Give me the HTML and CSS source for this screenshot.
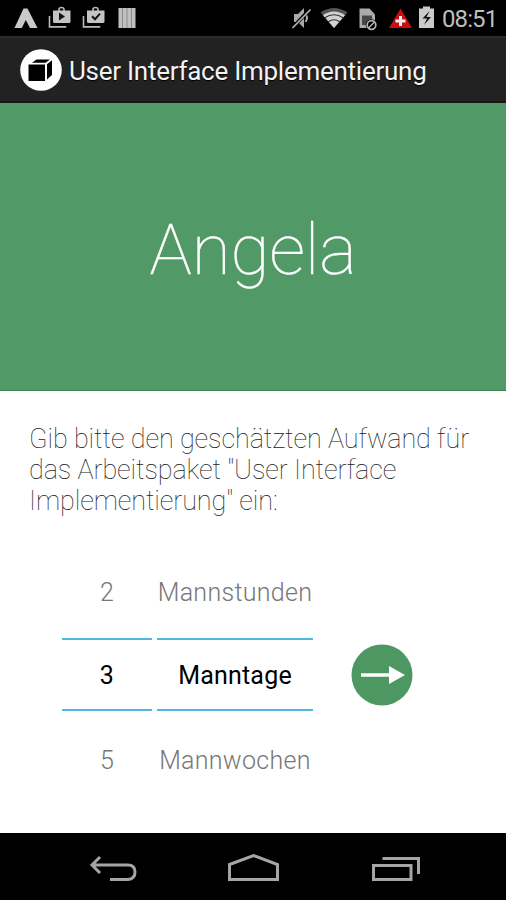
FILE: index.html
```html
<!DOCTYPE html>
<html lang="de">
<head>
<meta charset="utf-8">
<title>User Interface Implementierung</title>
<link rel="stylesheet" href="styles.css">
</head>
<body>
<div class="screen">
  <header class="status">
    <svg class="status-left" width="150" height="36" viewBox="0 0 150 36">
      <path d="M23.500 8.500h4L37.500 28h-7.500l-4.200-8-4 8h-7.300z" fill="#c9c9c9"/>
      <g fill="none" stroke="#b9b9b9" stroke-width="1.600">
        <path d="M49.500 16v10.900h16.800M83.500 16v10.900h16.800"/>
        <path d="M59 11V9.500q0-2 2.500-2t2.500 2V11M93 11V9.500q0-2 2.500-2t2.500 2V11"/>
      </g>
      <path d="M53 10.500h17.500v11q0 1.500-1.500 1.500H54.500q-1.500 0-1.500-1.500zM87 10.500h17.500v11q0 1.500-1.500 1.500H88.500q-1.500 0-1.500-1.500z" fill="#c4c4c4"/>
      <path d="M59 12.500v8l6-4z" fill="#111"/>
      <path d="M92 16.200l3 3 5-5.500" fill="none" stroke="#111" stroke-width="2"/>
      <path d="M118.500 8h17v20h-17z" fill="#c0c0c0"/>
      <path d="M122.500 8v20M127 8v20M131.500 8v20" stroke="#8a8a8a" stroke-width="1"/>
    </svg>
    <svg class="status-right" width="160" height="36" viewBox="280 0 160 36">
      <path d="M294 14h4l6-6v20l-6-6h-4z" fill="#a9a9a9"/>
      <path d="M305.500 14q3 4 0 8" fill="none" stroke="#a9a9a9" stroke-width="2"/>
      <path d="M309.500 9.500L292.500 28" stroke="#000" stroke-width="3.500"/>
      <path d="M310.500 9.500L292.500 28" stroke="#b5b5b5" stroke-width="1.700"/>
      <path d="M320.500 12.500q13.500-9 27 0L334 28z" fill="#555"/>
      <path d="M323 15.300q11-7.500 22 0L334 28z" fill="#d2d2d2"/>
      <path d="M324.500 18q9.500-6.500 19 0M328 22q6-4.500 12 0" fill="none" stroke="#333" stroke-width="1.200"/>
      <path d="M359.500 8.500h10l5.500 6V28h-15.500z" fill="#ababab"/>
      <path d="M362 15.500h10v4q-5 1-5.500 5.500H362z" fill="#484848"/>
      <circle cx="371.500" cy="25" r="5.800" fill="#000"/>
      <circle cx="371.500" cy="25" r="4.300" fill="none" stroke="#b5b5b5" stroke-width="1.700"/>
      <path d="M368.500 28l6-6" stroke="#b5b5b5" stroke-width="1.500"/>
      <path d="M400.500 8.500L412 28h-23z" fill="#c80e13"/>
      <path d="M400.500 16v10M395.500 21h10" stroke="#eee" stroke-width="3"/>
      <path d="M423 6.500h7v2h4V28h-15V8.500h4z" fill="#cacaca"/>
      <path d="M429.500 11l-7 7.500h4.500l-3 6.500 7-8h-4.500z" fill="#111"/>
    </svg>
    <span class="clock">08:51</span>
  </header>
  <div class="bar">
    <svg class="logo" width="42" height="42" viewBox="0 0 42 42">
      <circle cx="21" cy="21" r="20.800" fill="#fff"/>
      <path d="M8.500 15.500H25V32H8.500zM12 13.800l4.500-3.300h13.500L25.500 13.800zM27 15.200l5-4v14.800L27 30.500z" fill="#000"/>
    </svg>
    <h1 class="title">User Interface Implementierung</h1>
  </div>
  <section class="hero"><span class="name">Angela</span></section>
  <main class="content">
    <p class="prompt"><span class="line">Gib bitte den geschätzten Aufwand für</span><span class="line">das Arbeitspaket "User Interface</span><span class="line">Implementierung" ein:</span></p>
    <div class="pickers">
      <div class="picker num"><span class="opt">2</span><span class="opt current">3</span><span class="opt">5</span></div>
      <div class="picker unit"><span class="opt">Mannstunden</span><span class="opt current">Manntage</span><span class="opt">Mannwochen</span></div>
      <button class="go" aria-label="Weiter">
        <svg width="62" height="62" viewBox="0 0 62 62"><circle cx="31" cy="31" r="30.500" fill="#4d9862"/><path d="M10 29.200h28V22l16 9-16 9v-7.200H10z" fill="#fff"/></svg>
      </button>
    </div>
  </main>
  <nav class="nav">
    <svg width="506" height="67" viewBox="0 833 506 67" fill="none" stroke="#a5a5a5" stroke-width="3">
      <path d="M100 857l-8 8 8 8M92 865h36q7 0 7 7t-7 7.500h-18"/>
      <path d="M229.500 864.500L253.500 855.500l24 9v15h-48z"/>
      <path d="M373.500 865.500h37.500v14h-37.500zM382.500 858.500h36v15.500"/>
    </svg>
  </nav>
</div>
</body>
</html>
```
FILE: styles.css
```css
body { margin: 0; background: #fff; font-family: Roboto, sans-serif; }
.screen { width: 506px; height: 900px; display: flex; flex-direction: column; overflow: hidden; }
.status { height: 36px; flex: none; background: #000; display: flex; align-items: center; }
.status-right { margin-left: 130px; }
.clock { margin-left: 2px; padding-top: 1px; font-size: 24px; line-height: 36px; letter-spacing: -0.900px; color: #bebebe; white-space: nowrap; }
.bar { height: 67px; flex: none; box-sizing: border-box; background: #222; border-top: 2px solid #2b2b2b; border-bottom: 2px solid #171717; display: flex; align-items: center; padding-left: 20px; gap: 7px; }
.logo { flex: none; }
.title { margin: 0; padding-top: 2px; font-size: 26px; font-weight: 400; line-height: 36px; letter-spacing: -0.260px; color: #f3f3f3; white-space: nowrap; text-shadow: 0 1px 1px #000; }
.hero { height: 288px; flex: none; box-sizing: border-box; background: #519966; border-bottom: 1px solid #37864f; display: flex; justify-content: center; padding-top: 105px; }
.name { font-size: 71px; line-height: 84px; font-weight: 100; letter-spacing: -0.200px; color: #fff; -webkit-text-stroke: 0.400px #fff; white-space: nowrap; }
.content { flex: 1; padding: 33px 29px 0; }
.prompt { margin: 0; font-size: 27px; font-weight: 100; line-height: 31px; letter-spacing: -0.110px; color: #222; }
.line { display: block; white-space: nowrap; }
.pickers { display: flex; padding-left: 33px; margin-top: 33px; }
.picker { display: flex; flex-direction: column; align-items: center; }
.num { width: 90px; }
.unit { width: 156px; margin-left: 5px; }
.opt { height: 84px; line-height: 85px; font-size: 25px; font-weight: 300; letter-spacing: 0.300px; color: #777; white-space: nowrap; }
.current { box-sizing: border-box; width: 100%; height: 73px; margin: 4px 0 7px; border: solid #50b8dc; border-width: 2px 0; line-height: 71px; text-align: center; font-weight: 400; letter-spacing: 0.200px; color: #000; }
.go { margin: 94px 0 0 38px; width: 62px; height: 62px; padding: 0; border: 0; background: none; }
.go svg { display: block; }
.nav { height: 67px; flex: none; background: #000; }
.nav svg { display: block; }
```
